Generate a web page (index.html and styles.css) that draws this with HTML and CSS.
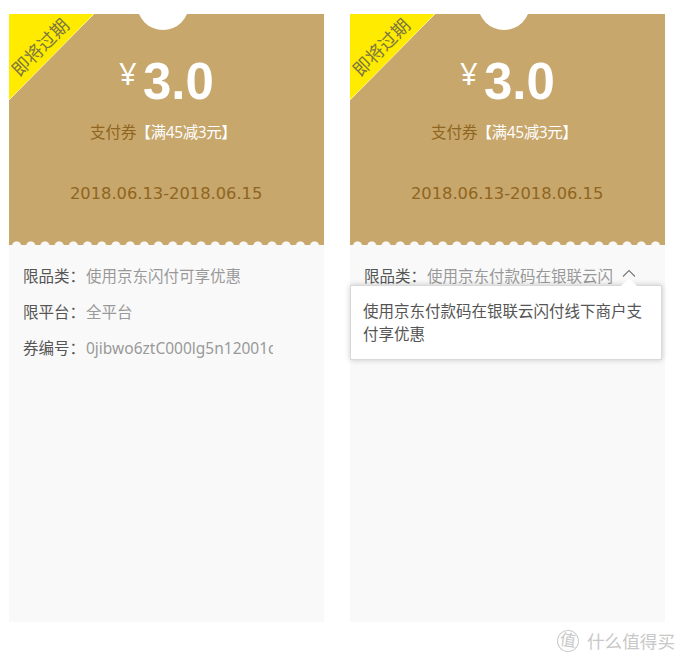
FILE: index.html
```
<!DOCTYPE html>
<html lang="zh-CN">
<head>
  <meta charset="UTF-8">
  <meta name="viewport" content="width=device-width, initial-scale=1.0">
  <title>优惠券</title>
  <link rel="stylesheet" href="styles.css">
</head>

<body>
  <div class="coupon-list">
    <div class="coupon">
      <div class="coupon-head">
        <div class="notch"></div>
        <div class="ribbon"><span>即将过期</span></div>
        <div class="price"><em>¥</em><strong>3.0</strong></div>
        <div class="limit">支付券<span>【满45减3元】</span></div>
        <div class="time">2018.06.13-2018.06.15</div>
      </div>
      <div class="coupon-body">
        <div class="range-item">
          <span class="label">限品类：</span>
          <span class="txt">使用京东闪付可享优惠</span>
        </div>
        <div class="range-item">
          <span class="label">限平台：</span>
          <span class="txt">全平台</span>
        </div>
        <div class="range-item">
          <span class="label">券编号：</span>
          <span class="txt">0jibwo6ztC000lg5n12001q</span>
        </div>
      </div>
    </div>

    <div class="coupon">
      <div class="coupon-head">
        <div class="notch"></div>
        <div class="ribbon"><span>即将过期</span></div>
        <div class="price"><em>¥</em><strong>3.0</strong></div>
        <div class="limit">支付券<span>【满45减3元】</span></div>
        <div class="time">2018.06.13-2018.06.15</div>
      </div>
      <div class="coupon-body">
        <div class="range-item">
          <span class="label">限品类：</span>
          <span class="txt">使用京东付款码在银联云闪</span>
          <svg class="arrow" width="14" height="9" viewBox="0 0 14 9">
            <path d="M1 7.5 L7 1.5 L13 7.5" fill="none" stroke="#777" stroke-width="1.1"/>
          </svg>
        </div>
        <div class="tips">使用京东付款码在银联云闪付线下商户支付享优惠</div>
      </div>
    </div>
  </div>

  <div class="watermark">
    <span class="watermark-logo">值</span>
    <span>什么值得买</span>
  </div>
</body>
</html>
```
FILE: styles.css
```
body {
  margin: 0;
  height: 658px;
  overflow: hidden;
  background: #fff;
  font-family: "Noto Sans", "Noto Sans CJK SC", sans-serif;
  font-size: 15.5px;
}

.coupon-list {
  display: flex;
  gap: 26px;
  padding: 14px 0 0 9px;
}

.coupon {
  width: 315px;
  height: 608px;
  background: #f9f9f9;
  position: relative;
}

.coupon-head {
  position: relative;
  box-sizing: border-box;
  height: 231px;
  padding-top: 40px;
  overflow: hidden;
  background: #c7a76c;
  color: #8f6521;
}

/* scalloped edge */
.coupon-head::after {
  content: "";
  position: absolute;
  left: 0;
  right: 0;
  bottom: 0;
  height: 4px;
  background: radial-gradient(circle at 7.6px 5px, #f9f9f9 4.2px, transparent 5px) 0 0 / 14.2px 4px repeat-x;
}

.notch {
  position: absolute;
  top: -36px;
  left: 128px;
  width: 52px;
  height: 52px;
  border-radius: 50%;
  background: #fff;
}

.ribbon {
  position: absolute;
  top: 0;
  left: 0;
  width: 85px;
  height: 86px;
  background: linear-gradient(to bottom right, #ffeb00 49.5%, #fff3a0 50%, transparent 50.5%);
}

.ribbon span {
  position: absolute;
  top: 23px;
  left: -7px;
  width: 76px;
  text-align: center;
  line-height: 20px;
  font-size: 18px;
  color: #7b7642;
  transform: rotate(-45deg);
}

.price {
  display: flex;
  height: 56px;
  padding-left: 110px;
  color: #fff;
}

.price em {
  width: 24px;
  font-family: "Noto Sans", sans-serif;
  font-style: normal;
  font-size: 31px;
  line-height: 38px;
}

.price strong {
  font-family: "Liberation Sans", Arial, sans-serif;
  font-size: 51px;
  line-height: 56px;
}

.limit {
  margin-top: 10px;
  padding-left: 81px;
  line-height: 24px;
  white-space: nowrap;
}

.limit span {
  margin-left: -1px;
  font-family: "Open Sans", "Noto Sans CJK SC", sans-serif;
  letter-spacing: -0.4px;
  color: #fff;
}

.time {
  margin-top: 38px;
  padding-left: 61px;
  font-family: "DejaVu Sans", Verdana, sans-serif;
  font-size: 16.3px;
  line-height: 24px;
  white-space: nowrap;
}

.coupon-body {
  position: relative;
  padding: 13px 14px 0;
}

.range-item {
  display: flex;
  height: 36px;
  line-height: 36px;
}

.label {
  flex: none;
  width: 63px;
  color: #555;
}

.txt {
  width: 187px;
  overflow: hidden;
  white-space: nowrap;
  color: #999;
}

.arrow {
  margin: 11px 0 0 8px;
}

.tips {
  position: absolute;
  top: 40px;
  left: 0;
  box-sizing: border-box;
  width: 312px;
  height: 75px;
  padding: 14px 12px;
  border: 1px solid #d9d9d9;
  background: #fff;
  box-shadow: 0 0 6px rgba(0, 0, 0, 0.2);
  line-height: 23px;
  color: #555;
}

.tips::before {
  content: "";
  position: absolute;
  top: -8px;
  left: 270px;
  border: 8px solid transparent;
  border-top: 0;
  border-bottom-color: #fff;
}

.watermark {
  display: flex;
  align-items: center;
  gap: 8px;
  position: absolute;
  right: 5px;
  bottom: 5px;
  font-size: 17.6px;
  line-height: 24px;
  color: #c8c8c8;
}

.watermark-logo {
  width: 20px;
  height: 20px;
  border: 1px solid #ccc;
  border-radius: 50%;
  text-align: center;
  font-size: 16px;
  line-height: 19px;
  transform: rotate(8deg);
}
```
